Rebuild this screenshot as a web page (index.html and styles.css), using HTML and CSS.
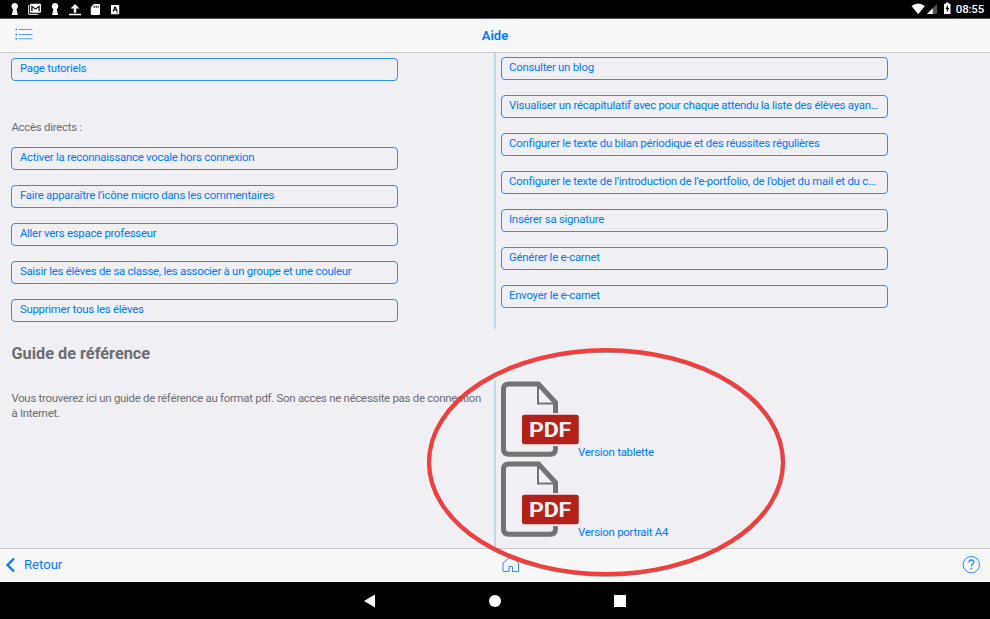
FILE: index.html
```html
<!DOCTYPE html>
<html lang="fr">
<head>
<meta charset="utf-8">
<title>Aide</title>
<link rel="stylesheet" href="styles.css">
</head>
<body>
<div class="screen">
  <header class="status">
    <svg class="status-icons" width="130" height="18" viewBox="0 0 130 18" fill="#fff">
      <path id="pawn" d="M14.700 3a3.200 3.200 0 0 0-2.700 5l1 1.500-1.300 5.500h6.200l-1.400-5.500 1-1.500A3.200 3.200 0 0 0 14.700 3z"/>
      <path d="M28.700 5v9.300h9.600" fill="none" stroke="#fff"/>
      <path fill-rule="evenodd" d="M31 3.700h9q1 0 1 1v7q0 1-1 1h-9q-1 0-1-1v-7q0-1 1-1zm.3 1.500v6h1.200V7.400l3 2.300 3-2.300v3.800h1.200v-6l-4.200 3.200z"/>
      <use href="#pawn" x="40.3"/>
      <path d="M75 4l4.500 4.500H76.200v4.300h-2.400V8.500H70.500zM69 13.800h12v1.400H69z"/>
      <path fill-rule="evenodd" d="M94 4h5q1 0 1 1v9q0 1-1 1h-7.200q-1 0-1-1V7.300zm-.2 1.700v2h1v-2zm1.900 0v2h1v-2zm1.900 0v2h1v-2z"/>
      <path fill-rule="evenodd" d="M111 5h8.200v9.200H111zm3.500 1.500L112.500 11.500h1.300l.4-1.100h1.900l.4 1.100h1.300l-2-5zm.6 1.400l.6 1.500h-1.200zM116.500 12.500v.8h1.500v-.8z"/>
    </svg>
    <div class="status-right">
      <svg width="44" height="18" viewBox="908 0 44 18">
        <path d="M910.500 6q6.700-5 13.400 0l-6.700 8.300z" fill="#fff"/>
        <path d="M936 4v10h-10z" fill="#555"/><path d="M931.700 8.300V14H926z" fill="#fff"/>
        <path fill-rule="evenodd" d="M945 2.500h2.600V3.700H949.500V14H943V3.700h2zm1.900 2.300L944.500 9h1.300v3.400L948.300 8H947z" fill="#fff"/>
      </svg>
      <span class="time">08:55</span>
    </div>
  </header>
  <nav class="navbar">
    <svg class="list" width="20" height="14" viewBox="0 0 20 14"><path d="M4 1.500h13.500M4 6.500h13.500M4 10.800h13.500" stroke="#4a9eff"/><path d="M.5 1.500h1.500M.5 6.500h1.500M.5 10.800h1.500" stroke="#007aff" stroke-width="1.500"/></svg>
    <h1>Aide</h1>
  </nav>
  <main>
    <section class="columns top">
      <div class="left">
        <a class="button">Page tutoriels</a>
        <p class="label">Accès directs :</p>
        <div class="links">
          <a class="button">Activer la reconnaissance vocale hors connexion</a>
          <a class="button">Faire apparaître l’icône micro dans les commentaires</a>
          <a class="button">Aller vers espace professeur</a>
          <a class="button">Saisir les élèves de sa classe, les associer à un groupe et une couleur</a>
          <a class="button">Supprimer tous les élèves</a>
        </div>
      </div>
      <div class="right links">
        <a class="button">Consulter un blog</a>
        <a class="button">Visualiser un récapitulatif avec pour chaque attendu la liste des élèves ayan…</a>
        <a class="button">Configurer le texte du bilan périodique et des réussites régulières</a>
        <a class="button">Configurer le texte de l’introduction de l’e-portfolio, de l’objet du mail et du c…</a>
        <a class="button">Insérer sa signature</a>
        <a class="button">Générer le e-carnet</a>
        <a class="button">Envoyer le e-carnet</a>
      </div>
    </section>
    <h2>Guide de référence</h2>
    <section class="columns guide">
      <p class="left intro">Vous trouverez ici un guide de référence au format pdf. Son acces ne nécessite pas de connection<br>à Internet.</p>
      <div class="right">
        <a class="pdf">
          <svg width="77" height="80" viewBox="0 0 77 80">
            <g id="document"><path d="M54.500 32V21.500L37.500 3H8Q2.500 3 2.500 8.500v59.500Q2.500 73.300 8 73.300H49Q54.500 73.300 54.500 68V65" fill="none" stroke="#717375" stroke-width="5"/>
            <path d="M37 3.500v19H55" fill="none" stroke="#717375" stroke-width="2"/>
            <rect x="21" y="33.700" width="56.700" height="29.500" rx="2.500" fill="#b32119"/>
            <text x="28" y="56" textLength="42" lengthAdjust="spacingAndGlyphs" class="pdf-text">PDF</text></g>
          </svg><span>Version tablette</span>
        </a>
        <a class="pdf">
          <svg width="77" height="80" viewBox="0 0 77 80"><use href="#document"/></svg><span>Version portrait A4</span>
        </a>
      </div>
    </section>
  </main>
  <footer class="toolbar">
    <a class="back"><svg width="11" height="16" viewBox="0 0 11 16"><path d="M9 1.500L2.500 8 9 14.500" fill="none" stroke="#007aff" stroke-width="2.200"/></svg>Retour</a>
    <svg class="home" width="18" height="18" viewBox="0 0 18 18"><path d="M1 7v8.500h6v-5h3.500v5h6V7L9 .5z" fill="none" stroke="#2b8dff"/></svg>
    <svg class="help" width="18" height="18" viewBox="0 0 18 18" fill="none" stroke="#2b8dff"><circle cx="9.300" cy="8.700" r="8.200"/><path d="M6.900 6.200Q6.900 4 9.300 4t2.500 2.100c0 2-2.500 1.800-2.500 4.200" stroke-width="1.400"/><path d="M9.300 11.900v1.500" stroke-width="1.600"/></svg>
  </footer>
  <div class="system">
    <svg width="12" height="14" viewBox="0 0 12 14"><path d="M0 7L11 .5v13z" fill="#fff"/></svg>
    <i class="circle"></i>
    <i class="square"></i>
  </div>
  <svg class="ellipse" width="360" height="232" viewBox="0 0 360 232" fill="none"><ellipse cx="180" cy="116.700" rx="177" ry="112" stroke="#888" stroke-width="4"/><ellipse cx="180" cy="116" rx="177" ry="112" stroke="#f43d3d" stroke-width="4"/></svg>
</div>
</body>
</html>
```
FILE: styles.css
```css
* { box-sizing: border-box; }
body { margin: 0; font: 11.4px/15px Roboto, sans-serif; letter-spacing: -.25px; color: #6d6d72; background: #efeff4; }
.screen { position: relative; display: flex; flex-direction: column; width: 990px; height: 619px; overflow: hidden; }
.status { height: 19px; background: #000; display: flex; justify-content: space-between; border-bottom: 1px solid #555; }
.status-right { display: flex; padding-right: 6px; color: #fff; }
.time { font-size: 11.5px; line-height: 18px; font-weight: 500; margin-left: 3px; letter-spacing: -.2px; }
.navbar { height: 34px; background: #f7f7f8; border-bottom: 1px solid #c9c9cc; display: grid; grid-template-columns: 1fr auto 1fr; align-items: center; padding: 0 15px 1px; }
h1 { margin: 0; font-size: 13px; letter-spacing: 0; font-weight: 600; color: #007aff; }
main { height: 495px; }
.columns { display: grid; grid-template-columns: 494px 1fr; }
.left { padding-left: 11.4px; }
.right { border-left: 2px solid #b6dcec; padding-left: 5px; }
.top { height: 276px; }
.top .left { padding-top: 5px; }
.top .right { padding-top: 4px; }
.links { display: flex; flex-direction: column; gap: 15px; }
.button { display: block; width: 387px; height: 23px; border: 1px solid #2b8dff; border-radius: 4px; padding: 0 4px 0 7.5px; line-height: 18px; color: #007aff; white-space: nowrap; overflow: hidden; text-overflow: ellipsis; }
.right .button { padding-left: 7px; }
.label { margin: 39px 0 12px; }
h2 { margin: 14px 0 18px 11.5px; font-size: 16.3px; letter-spacing: 0; line-height: 20px; height: 20px; font-weight: 700; padding-top: 1px; }
.guide { height: 167px; }
.intro { margin: 10px 0 0; white-space: nowrap; letter-spacing: -.26px; }
.pdf { display: flex; align-items: flex-end; height: 80px; color: #007aff; }
.pdf svg { overflow: visible; }
.pdf span { line-height: 15px; margin-bottom: 1px; }
.pdf-text { font: 700 21px Roboto, sans-serif; fill: #f2f0f2; }
.toolbar { height: 34px; background: #f7f7f8; border-top: 1px solid #c9c9cc; display: grid; grid-template-columns: 502px 1fr auto; align-items: center; padding: 0 10px 2px 0; }
.back { display: flex; align-items: center; gap: 8px; padding-left: 5px; font-size: 13.1px; letter-spacing: 0; color: #007aff; }
.system { height: 37px; background: #000; display: flex; align-items: center; padding-left: 364px; }
.circle { width: 12px; height: 12px; border-radius: 50%; background: #fff; margin-left: 113px; }
.square { width: 12px; height: 12px; background: #fff; margin-left: 113px; }
.ellipse { position: absolute; left: 426px; top: 346px; }
```
